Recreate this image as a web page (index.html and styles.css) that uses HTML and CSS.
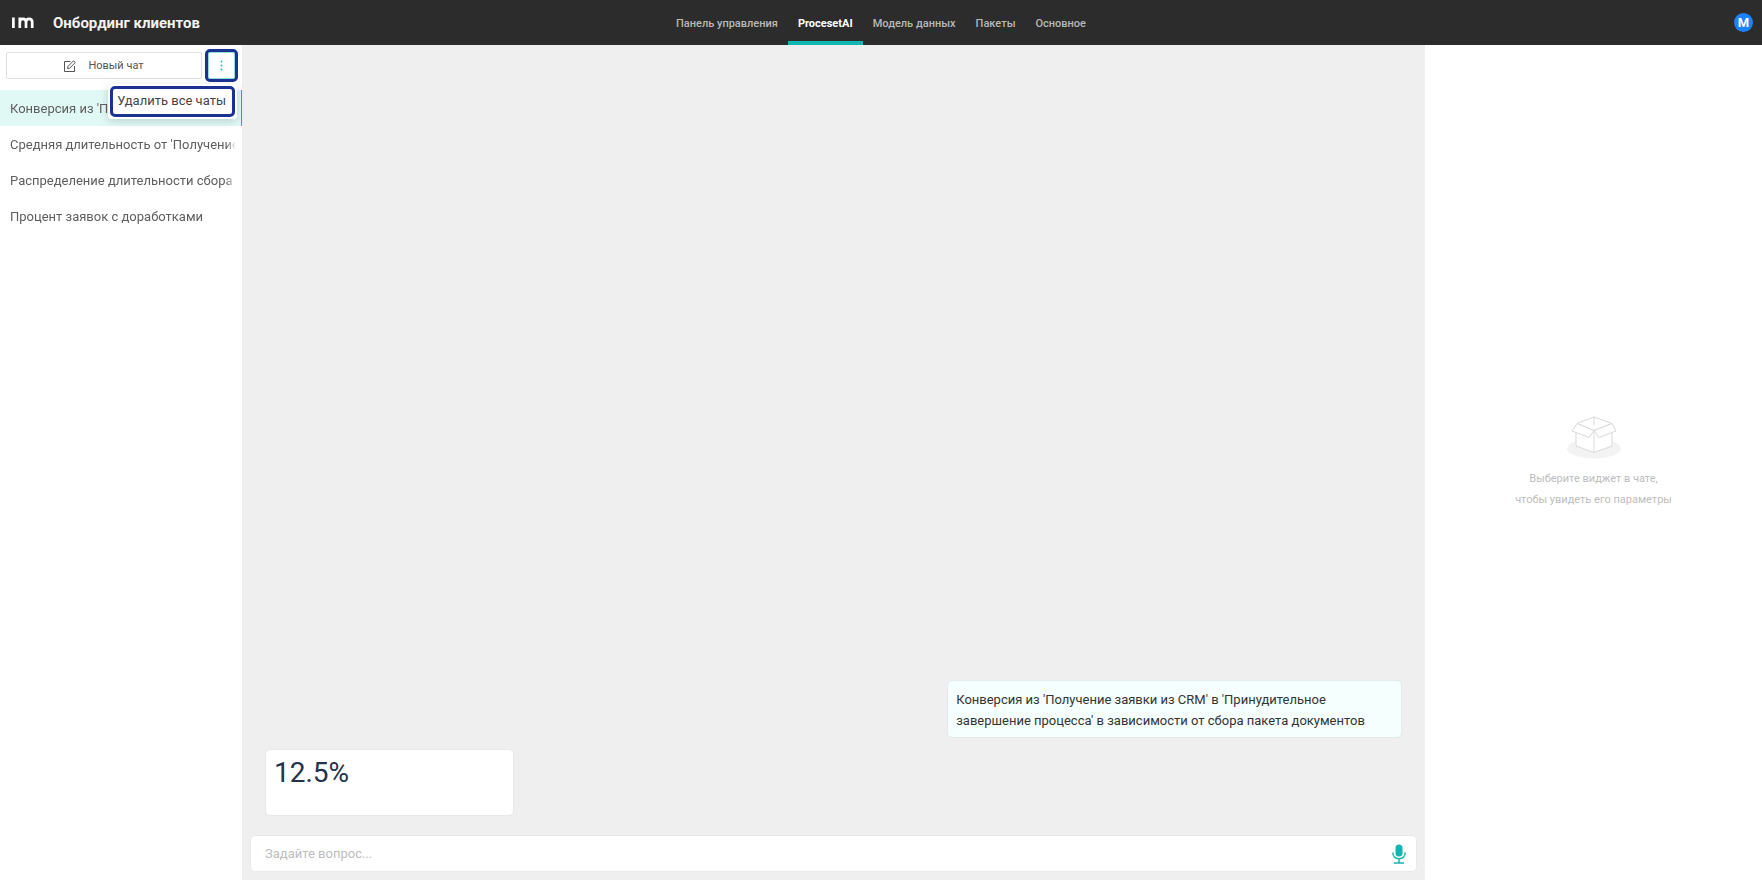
FILE: index.html
```html
<!DOCTYPE html>
<html lang="ru">
<head>
<meta charset="utf-8">
<title>Онбординг клиентов</title>
<link rel="stylesheet" href="styles.css">
</head>
<body>
<header class="header">
  <div class="brand">
    <svg class="logo" width="22" height="12" viewBox="0 0 22 12" aria-label="im" role="img">
      <path d="M1.400 0.500V11M7.800 11V0.500M7.800 5.500C7.800 3 9 1.900 10.900 1.900C12.900 1.900 14 3 14 5.200V11M14 5.500C14 3 15.300 1.900 17.100 1.900C19.200 1.900 20.200 3 20.200 5.200V11" fill="none" stroke="#fff" stroke-width="2.700"/>
    </svg>
    <h1 class="title">Онбординг клиентов</h1>
  </div>
  <nav class="nav">
    <a class="nav-link" href="#">Панель управления</a>
    <a class="nav-link active" href="#">ProcesetAI</a>
    <a class="nav-link" href="#">Модель данных</a>
    <a class="nav-link" href="#">Пакеты</a>
    <a class="nav-link" href="#">Основное</a>
  </nav>
  <div class="user"><button class="avatar" type="button">M</button></div>
</header>
<div class="workspace">
  <aside class="sidebar">
    <div class="toolbar">
      <button class="new-chat" type="button">
        <svg width="12" height="12" viewBox="0 0 12 12" fill="none" stroke="#555" aria-hidden="true">
          <path d="M6.500 1.500H0.500V11.500H10.500V6"/>
          <path d="M3.500 8.500L4 6.300L9.500 0.800L11.300 2.500L5.700 8.100Z"/>
        </svg>
        Новый чат
      </button>
      <div class="more-wrap">
        <button class="more" type="button" aria-label="Действия">
          <svg width="3" height="11" viewBox="0 0 3 11" fill="#12b5b0" aria-hidden="true"><circle cx="1.500" cy="1.500" r="0.900"/><circle cx="1.500" cy="5.500" r="0.900"/><circle cx="1.500" cy="9.500" r="0.900"/></svg>
        </button>
        <div class="menu"><button class="menu-item" type="button">Удалить все чаты</button></div>
      </div>
    </div>
    <nav class="chats">
      <a class="chat active" href="#"><span>Конверсия из 'Получение заявки из CRM'</span></a>
      <a class="chat" href="#"><span>Средняя длительность от 'Получение заявки'</span></a>
      <a class="chat" href="#"><span>Распределение длительности сбора пакета</span></a>
      <a class="chat" href="#"><span>Процент заявок с доработками</span></a>
    </nav>
  </aside>
  <main class="main">
    <div class="messages">
      <p class="question">Конверсия из 'Получение заявки из CRM' в 'Принудительное завершение процесса' в зависимости от сбора пакета документов</p>
      <div class="widget">12.5%</div>
    </div>
    <form class="composer">
      <input class="prompt" type="text" placeholder="Задайте вопрос..." aria-label="Задайте вопрос">
      <button class="mic" type="button" aria-label="Голосовой ввод">
        <svg width="14" height="20" viewBox="0 0 14 20" fill="none" stroke="#12b5b0" stroke-width="1.500" aria-hidden="true">
          <rect x="3.500" y="0.500" width="7" height="12" rx="3.500" fill="#12b5b0" stroke="none"/>
          <path d="M0.800 8.500C0.800 12.500 3.500 14.700 7 14.700S13.200 12.500 13.200 8.500M7 14.700V18.700M2 18.900H12"/>
        </svg>
      </button>
    </form>
  </main>
  <aside class="params">
    <svg width="54" height="43" viewBox="0 0 54 43" aria-hidden="true">
      <ellipse cx="27" cy="32.500" rx="27" ry="10" fill="#f3f3f3"/>
      <g fill="#fff" stroke="#d9d9d9" stroke-linejoin="round">
        <path d="M9 12V30L27 36.500L45 30V12L27 1Z"/>
        <path d="M27 1L45 7.500L27 14.500L10 7.500Z"/>
        <path d="M27 1V9M27 14.500V36.500" fill="none"/>
        <path d="M10 7.500L27 14.500L22 21.500L5 15Z"/>
        <path d="M45 7.500L27 14.500L32 21.500L49 15Z"/>
      </g>
    </svg>
    <p class="hint">Выберите виджет в чате,<br>чтобы увидеть его параметры</p>
  </aside>
</div>
</body>
</html>
```
FILE: styles.css
```css
* { box-sizing: border-box; }
body {
  margin: 0;
  min-height: 100vh;
  display: flex;
  flex-direction: column;
  font: 13px/21px Roboto, "Noto Sans", sans-serif;
  color: #333;
}
button, input { font: inherit; color: inherit; }
button { padding: 0; border: 0; background: none; cursor: pointer; }
a { color: inherit; text-decoration: none; }

.header {
  display: grid;
  grid-template-columns: 1fr auto 1fr;
  height: 45px;
  background: #2c2c2c;
  color: #fff;
}
.brand { display: flex; align-items: center; gap: 19px; padding-left: 12px; }
.title { margin: 0; padding-top: 2px; font-size: 15px; font-weight: 700; color: #f2f2f2; }
.nav { display: flex; font-size: 11px; font-weight: 500; color: #b8b8b8; }
.nav-link { display: flex; align-items: center; padding: 6px 10px 0; border-bottom: 4px solid transparent; }
.nav-link.active { color: #fff; font-weight: 700; border-color: #12b5b0; }
.user { display: flex; align-items: center; justify-content: flex-end; padding-right: 9px; }
.avatar {
  width: 19px;
  height: 19px;
  border-radius: 50%;
  background: #1c82ff;
  font-size: 13px;
  line-height: 19px;
  font-weight: 700;
}

.workspace { flex: 1; display: grid; grid-template-columns: 242px 1fr 337px; }
.sidebar { min-width: 0; background: #fff; }
.toolbar { display: flex; gap: 3px; height: 45px; padding: 4px 4px 0 6px; }
.new-chat {
  flex: 1;
  display: flex;
  align-items: center;
  justify-content: center;
  gap: 12px;
  height: 27px;
  margin-top: 3px;
  border: 1px solid #e0e0e0;
  border-radius: 2px;
  font-size: 11px;
  color: #555;
}
.more-wrap { position: relative; }
.more {
  display: grid;
  place-items: center;
  width: 33px;
  height: 33px;
  border: 3px solid #1c3293;
  border-radius: 5px;
  box-shadow: inset 0 0 0 1px #8ee0dc;
}
.menu {
  position: absolute;
  top: 35px;
  right: 1px;
  z-index: 1;
  padding: 2px;
  border-radius: 3px;
  background: #fff;
  box-shadow: 0 2px 8px rgba(0, 0, 0, 0.16);
}
.menu-item {
  padding: 2px 6px 4px 4px;
  border: 3px solid #1c3293;
  border-radius: 5px;
  line-height: 19px;
  white-space: nowrap;
  color: #444;
}
.chat { display: block; padding: 1px 6px 0 10px; line-height: 35px; color: #5e5e5e; }
.chat span {
  display: block;
  overflow: hidden;
  white-space: nowrap;
  mask-image: linear-gradient(to left, transparent, #000 10px);
}
.chat.active { background: #e0f9f5; border-right: 1px solid #12b5b0; }

.main { display: flex; flex-direction: column; min-width: 0; padding: 8px; background: #efefef; }
.messages {
  flex: 1;
  display: flex;
  flex-direction: column;
  justify-content: flex-end;
  gap: 11px;
  padding: 0 15px 19px;
}
.question {
  align-self: flex-end;
  width: 40%;
  margin: 0;
  padding: 8px 8px 6px;
  border: 1px solid #e2eceb;
  border-radius: 5px;
  background: #f4fffe;
}
.widget {
  width: 249px;
  height: 67px;
  padding: 8px;
  border: 1px solid #e8e8e8;
  border-radius: 5px;
  background: #fff;
  font-size: 28px;
  line-height: 30px;
  color: #23324a;
}
.composer {
  display: flex;
  align-items: center;
  height: 37px;
  padding: 0 10px 0 14px;
  border: 1px solid #e9e9e9;
  border-radius: 5px;
  background: #fff;
}
.prompt { flex: 1; min-width: 0; padding: 0; border: 0; outline: 0; background: none; }
.prompt::placeholder { color: #bdbdbd; }
.mic { display: flex; }

.params {
  display: flex;
  flex-direction: column;
  align-items: center;
  justify-content: center;
  gap: 9px;
  background: #fff;
}
.hint { margin: 0; font-size: 11px; text-align: center; color: #bdbdbd; }
```
